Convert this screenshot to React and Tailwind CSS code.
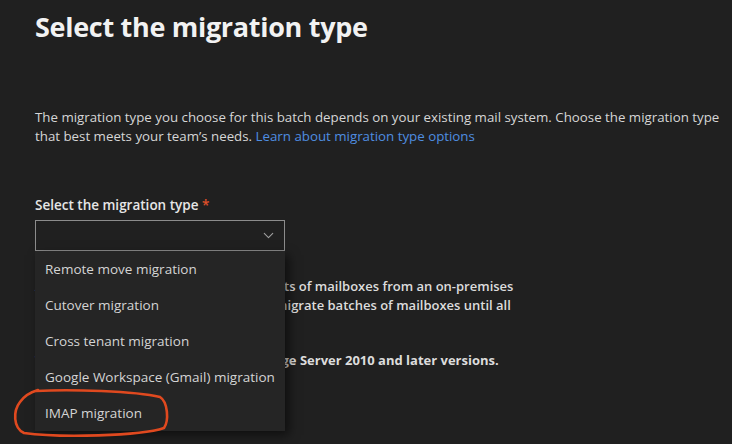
import { ChevronDown } from "lucide-react";

const options = [
  "Remote move migration",
  "Cutover migration",
  "Cross tenant migration",
  "Google Workspace (Gmail) migration",
  "IMAP migration",
];

export default function App() {
  return (
    <div
      className="relative w-[732px] h-[444px] overflow-hidden bg-[#202020] text-[#d6d6d6]"
      style={{ fontFamily: '"Open Sans", "Noto Sans", sans-serif' }}
    >
      <div className="pl-[35px] pr-[10px]">
        {/* Heading */}
        <h1 className="pt-[9px] text-[27px] leading-[36px] font-bold text-[#f2f2f2] tracking-[-0.3px]">
          Select the migration type
        </h1>

        {/* Intro */}
        <p className="mt-[63px] text-[13.3px] leading-[19px] text-[#d6d6d6] whitespace-nowrap">
          The migration type you choose for this batch depends on your existing mail system. Choose the migration type
          <br />
          that best meets your team&rsquo;s needs.{" "}
          <span className="text-[#4f8ee0]">Learn about migration type options</span>
        </p>

        {/* Field */}
        <div className="mt-[49px]">
          <label className="block text-[13.5px] leading-[20px] font-semibold text-[#e6e6e6]">
            Select the migration type <span className="text-[#e0502a]">*</span>
          </label>

          <div className="relative mt-[5px] w-[250px]">
            <div className="h-[31px] border border-[#8c8c8c] flex items-center justify-end pr-[7px]">
              <ChevronDown className="w-[17px] h-[17px] text-[#a0a0a0]" strokeWidth={1.5} />
            </div>

            {/* Dropdown menu */}
            <div className="absolute left-0 top-full z-10 w-[250px] bg-[#252525] shadow-[4px_4px_10px_rgba(0,0,0,0.55)]">
              {options.map((o) => (
                <div key={o} className="h-[36px] flex items-center pl-[10px] text-[13.5px] text-[#d4d4d4]">
                  {o}
                </div>
              ))}
            </div>
          </div>

          {/* Description behind the menu */}
          <div className="mt-[26px] w-[500px] text-[13px] leading-[19px] text-[#dcdcdc]">
            <p className="font-semibold whitespace-nowrap">
              A staged migration lets you move subsets of mailboxes from an on-premises
              <br />
              Exchange organizations; later you can migrate batches of mailboxes until all
            </p>
            <p className="mt-[36px] font-bold whitespace-nowrap">
              This migration type is used for Exchange Server 2010 and later versions.
            </p>
          </div>
        </div>
      </div>

      {/* Annotation circle */}
      <svg className="absolute left-0 top-0 z-20 pointer-events-none" width="732" height="444">
        <path
          d="M36 391 C 70 389, 135 391, 160 397 C 168 402, 169 421, 164 428 C 140 436, 60 438, 24 433 C 13 428, 13 411, 20 402 C 25 395, 31 392, 38 390"
          fill="none"
          stroke="#e0491f"
          strokeWidth="2.6"
          strokeLinecap="round"
        />
      </svg>
    </div>
  );
}
